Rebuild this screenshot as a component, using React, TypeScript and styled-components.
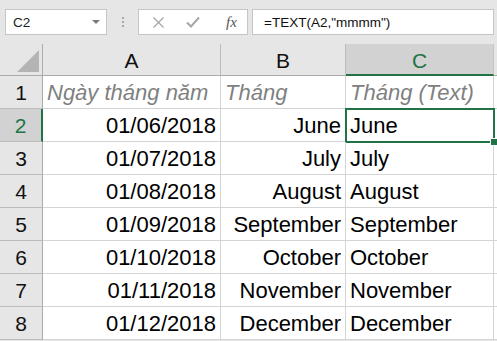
import React from 'react';
import styled, { createGlobalStyle } from 'styled-components';

const GlobalStyle = createGlobalStyle`
  html, body {
    margin: 0;
    padding: 0;
  }
  body {
    font-family: 'Liberation Sans', Arial, sans-serif;
    background: #e6e6e6;
  }
`;

const GREEN = '#217346';

const Page = styled.div`
  width: 497px;
  height: 341px;
  overflow: hidden;
  background: #e6e6e6;
`;

const FormulaBar = styled.div`
  height: 44px;
  box-sizing: border-box;
  padding: 9px 0 0 5px;
  display: flex;
  align-items: flex-start;
`;

const NameBox = styled.div`
  width: 102px;
  height: 26px;
  box-sizing: border-box;
  background: #fff;
  border: 1px solid #c6c6c6;
  display: flex;
  align-items: center;
  justify-content: space-between;
  padding: 0 6px 0 7px;
  font-size: 13.5px;
  color: #222;
`;

const DropArrow = styled.span`
  width: 0;
  height: 0;
  border-left: 4px solid transparent;
  border-right: 4px solid transparent;
  border-top: 4px solid #7a7a7a;
`;

const Grip = styled.div`
  width: 31px;
  height: 26px;
  display: flex;
  flex-direction: column;
  align-items: center;
  justify-content: center;
  gap: 2px;

  span {
    width: 2px;
    height: 2px;
    background: #a8a8a8;
  }
`;

const IconBox = styled.div`
  width: 110px;
  height: 26px;
  box-sizing: border-box;
  background: #fff;
  border: 1px solid #c6c6c6;
  display: flex;
  align-items: center;
  padding-left: 13px;
  gap: 21px;
`;

const Fx = styled.span`
  font-family: 'Liberation Serif', 'Times New Roman', serif;
  font-style: italic;
  font-size: 15px;
  color: #555;
  margin-left: 5px;
`;

const FormulaInput = styled.div`
  width: 242px;
  height: 26px;
  margin-left: 4px;
  box-sizing: border-box;
  background: #fff;
  border: 1px solid #c6c6c6;
  display: flex;
  align-items: center;
  padding-left: 11px;
  font-size: 13.5px;
  color: #111;
`;

const Sheet = styled.div`
  display: grid;
  grid-template-columns: 43px 178px 125px 148px 3px;
  grid-template-rows: 32px repeat(8, 33px);
  background: #fff;
`;

const Corner = styled.div`
  position: relative;
  background: #e6e6e6;
  border-right: 1px solid #ababab;
  border-bottom: 1px solid #ababab;

  &::after {
    content: '';
    position: absolute;
    right: 3px;
    bottom: 3px;
    width: 0;
    height: 0;
    border-left: 22px solid transparent;
    border-bottom: 22px solid #b4b4b4;
  }
`;

const ColHead = styled.div<{ $active?: boolean }>`
  box-sizing: border-box;
  background: ${({ $active }) => ($active ? '#d2d2d2' : '#e6e6e6')};
  color: ${({ $active }) => ($active ? GREEN : '#111')};
  border-right: 1px solid ${({ $active }) => ($active ? '#c4c4c4' : '#bcbcbc')};
  border-bottom: ${({ $active }) => ($active ? `2px solid ${GREEN}` : '1px solid #ababab')};
  font-size: 21px;
  line-height: 34px;
  text-align: center;
  overflow: hidden;
`;

const RowHead = styled.div<{ $active?: boolean }>`
  box-sizing: border-box;
  background: ${({ $active }) => ($active ? '#d2d2d2' : '#e6e6e6')};
  color: ${({ $active }) => ($active ? GREEN : '#111')};
  border-right: ${({ $active }) => ($active ? `2px solid ${GREEN}` : '1px solid #ababab')};
  border-bottom: 1px solid #bcbcbc;
  font-size: 21px;
  line-height: 33px;
  text-align: center;
`;

const Cell = styled.div<{ $align?: 'left' | 'right'; $title?: boolean; $selected?: boolean }>`
  position: relative;
  box-sizing: border-box;
  border-right: 1px solid #d4d4d4;
  border-bottom: 1px solid #d4d4d4;
  padding: 0 4px;
  font-size: 22px;
  line-height: 33px;
  white-space: nowrap;
  text-align: ${({ $align }) => $align || 'left'};
  font-style: ${({ $title }) => ($title ? 'italic' : 'normal')};
  color: ${({ $title }) => ($title ? '#808080' : '#000')};

  ${({ $selected }) =>
    $selected &&
    `
    &::after {
      content: '';
      position: absolute;
      top: -1px;
      left: -1px;
      right: -2px;
      bottom: -2px;
      border: 2px solid ${GREEN};
      pointer-events: none;
    }
  `}
`;

const FillHandle = styled.span`
  position: absolute;
  right: -5px;
  bottom: -5px;
  width: 6px;
  height: 6px;
  background: ${GREEN};
  border: 1px solid #fff;
  z-index: 2;
`;

const Spare = styled.div<{ $head?: boolean }>`
  background: ${({ $head }) => ($head ? '#e6e6e6' : '#fff')};
  border-bottom: 1px solid ${({ $head }) => ($head ? '#ababab' : '#d4d4d4')};
  box-sizing: border-box;
`;

const rows = [
  ['01/06/2018', 'June'],
  ['01/07/2018', 'July'],
  ['01/08/2018', 'August'],
  ['01/09/2018', 'September'],
  ['01/10/2018', 'October'],
  ['01/11/2018', 'November'],
  ['01/12/2018', 'December'],
];

const CancelIcon = () => (
  <svg width="13" height="13" viewBox="0 0 13 13">
    <path d="M1.5 1.5 L11.5 11.5 M11.5 1.5 L1.5 11.5" stroke="#a6a6a6" strokeWidth="1.3" fill="none" />
  </svg>
);

const EnterIcon = () => (
  <svg width="14" height="12" viewBox="0 0 14 12">
    <path d="M1 6.5 L5 10.5 L13 1.5" stroke="#a6a6a6" strokeWidth="2" fill="none" />
  </svg>
);

export default function App() {
  return (
    <Page>
      <GlobalStyle />
      <FormulaBar>
        <NameBox>
          <span>C2</span>
          <DropArrow />
        </NameBox>
        <Grip>
          <span />
          <span />
          <span />
        </Grip>
        <IconBox>
          <CancelIcon />
          <EnterIcon />
          <Fx>fx</Fx>
        </IconBox>
        <FormulaInput>=TEXT(A2,"mmmm")</FormulaInput>
      </FormulaBar>
      <Sheet>
        <Corner />
        <ColHead>A</ColHead>
        <ColHead>B</ColHead>
        <ColHead $active>C</ColHead>
        <Spare $head />

        <RowHead>1</RowHead>
        <Cell $title>Ngày tháng năm</Cell>
        <Cell $title>Tháng</Cell>
        <Cell $title>Tháng (Text)</Cell>
        <Spare />

        {rows.map(([date, month], i) => (
          <React.Fragment key={date}>
            <RowHead $active={i === 0}>{i + 2}</RowHead>
            <Cell $align="right">{date}</Cell>
            <Cell $align="right">{month}</Cell>
            <Cell $selected={i === 0}>
              {month}
              {i === 0 && <FillHandle />}
            </Cell>
            <Spare />
          </React.Fragment>
        ))}
      </Sheet>
    </Page>
  );
}
